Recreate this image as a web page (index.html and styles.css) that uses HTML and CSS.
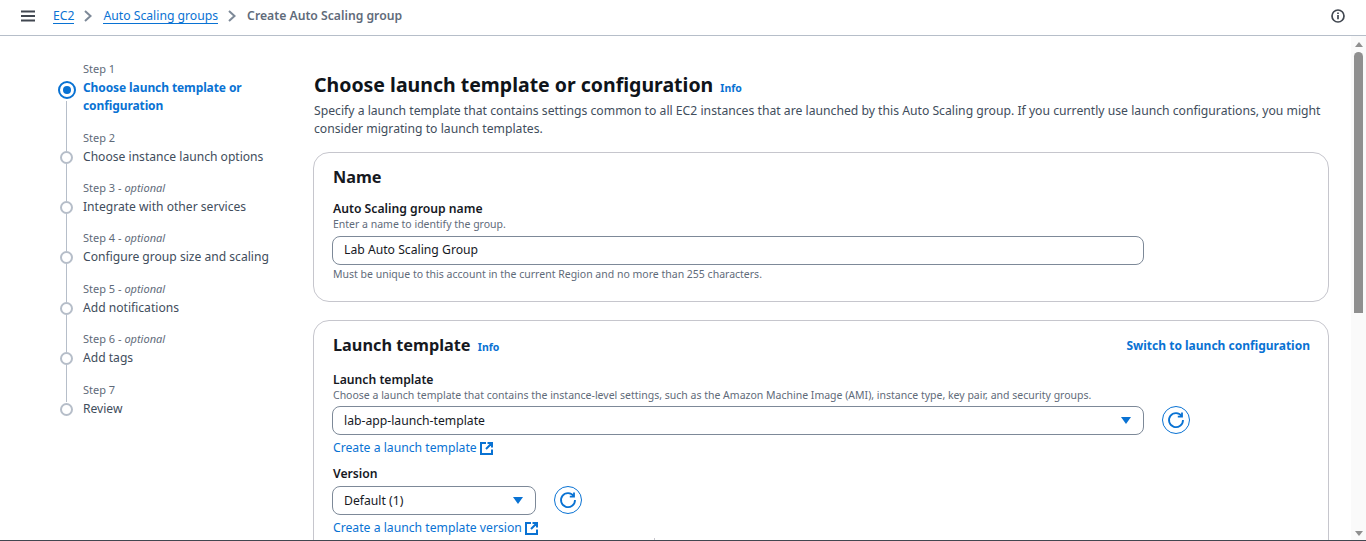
FILE: index.html
```html
<!DOCTYPE html>
<html lang="en">
  <head>
    <meta charset="utf-8" />
    <title>Create Auto Scaling group</title>
    <link rel="stylesheet" href="styles.css">
  </head>
  <body>
    <header class="topbar">
      <svg class="menu-icon" width="14" height="12" viewBox="0 0 14 12"><path d="M0 1.5h14M0 6h14M0 10.5h14" /></svg>
      <nav class="crumbs">
        <a href="#">EC2</a>
        <svg class="crumb-sep" width="8" height="12" viewBox="0 0 8 12"><path d="M1 1l5.5 5L1 11" /></svg>
        <a href="#">Auto Scaling groups</a>
        <svg class="crumb-sep" width="8" height="12" viewBox="0 0 8 12"><path d="M1 1l5.5 5L1 11" /></svg>
        <span class="crumb-current">Create Auto Scaling group</span>
      </nav>
      <svg class="info-icon" width="14" height="14" viewBox="0 0 14 14"><circle cx="7" cy="7" r="6" /><path d="M7 6v4.2M7 3.4v1.6" /></svg>
    </header>

    <div class="page">
      <div class="scroll-area">
        <aside class="steps">
          <div class="step current">
            <div class="step-label">Step 1</div>
            <div class="step-title">Choose launch template or configuration</div>
          </div>
          <div class="step">
            <div class="step-label">Step 2</div>
            <div class="step-title">Choose instance launch options</div>
          </div>
          <div class="step">
            <div class="step-label">Step 3 - <i>optional</i></div>
            <div class="step-title">Integrate with other services</div>
          </div>
          <div class="step">
            <div class="step-label">Step 4 - <i>optional</i></div>
            <div class="step-title">Configure group size and scaling</div>
          </div>
          <div class="step">
            <div class="step-label">Step 5 - <i>optional</i></div>
            <div class="step-title">Add notifications</div>
          </div>
          <div class="step">
            <div class="step-label">Step 6 - <i>optional</i></div>
            <div class="step-title">Add tags</div>
          </div>
          <div class="step last">
            <div class="step-label">Step 7</div>
            <div class="step-title">Review</div>
          </div>
        </aside>

        <main class="content">
          <h1>Choose launch template or configuration <a class="info" href="#">Info</a></h1>
          <p class="intro">Specify a launch template that contains settings common to all EC2 instances that are launched by this Auto Scaling group. If you currently use launch configurations, you might consider migrating to launch templates.</p>

          <section class="card name-card">
            <h2>Name</h2>
            <label class="field-label">Auto Scaling group name</label>
            <div class="hint">Enter a name to identify the group.</div>
            <div class="input">Lab Auto Scaling Group</div>
            <div class="hint below">Must be unique to this account in the current Region and no more than 255 characters.</div>
          </section>

          <section class="card">
            <div class="card-head">
              <h2>Launch template <a class="info" href="#">Info</a></h2>
              <a class="switch" href="#">Switch to launch configuration</a>
            </div>
            <label class="field-label">Launch template</label>
            <div class="hint">Choose a launch template that contains the instance-level settings, such as the Amazon Machine Image (AMI), instance type, key pair, and security groups.</div>
            <div class="select-row">
              <div class="input select wide">lab-app-launch-template<span class="caret"></span></div>
              <button class="refresh" type="button">
                <svg width="18" height="18" viewBox="0 0 18 18"><path d="M14.8 5.200A7 7 0 1 0 16 9" /><path d="M15 1.500v4.200h-4.200" /></svg>
              </button>
            </div>
            <a class="ext-link" href="#">Create a launch template
              <svg width="13" height="13" viewBox="0 0 13 13"><path d="M6 1H1v11h11V7.500M7.500 1H12v4.500M12 1L6 7" /></svg>
            </a>
            <label class="field-label version">Version</label>
            <div class="select-row version-row">
              <div class="input select narrow">Default (1)<span class="caret"></span></div>
              <button class="refresh" type="button">
                <svg width="18" height="18" viewBox="0 0 18 18"><path d="M14.8 5.200A7 7 0 1 0 16 9" /><path d="M15 1.500v4.200h-4.200" /></svg>
              </button>
            </div>
            <a class="ext-link" href="#">Create a launch template version
              <svg width="13" height="13" viewBox="0 0 13 13"><path d="M6 1H1v11h11V7.500M7.500 1H12v4.500M12 1L6 7" /></svg>
            </a>
            <div class="next-table"><span class="col-line"></span></div>
          </section>
        </main>
      </div>

      <div class="scrollbar">
        <span class="arrow up"></span>
        <span class="thumb"></span>
        <span class="arrow down"></span>
      </div>
    </div>
  </body>
</html>
```

FILE: styles.css
```css
html,
body {
  margin: 0;
  height: 100%;
  overflow: hidden;
}

body {
  display: flex;
  flex-direction: column;
  font-family: "Noto Sans", "Open Sans", sans-serif;
  font-size: 12.2px;
  line-height: 18px;
  color: #16191f;
  background: #ffffff;
  border-bottom: 1px solid #414750;
  box-sizing: border-box;
}

a {
  color: #0972d3;
  text-decoration: none;
}

/* top bar */
.topbar {
  flex: none;
  display: flex;
  align-items: center;
  height: 35px;
  padding: 0 21px;
  border-bottom: 1px solid #b6bec9;
  box-sizing: content-box;
}

.menu-icon {
  margin-top: -3px;
}

.menu-icon path {
  fill: none;
  stroke: #414750;
  stroke-width: 2;
}

.crumbs {
  display: flex;
  align-items: center;
  margin-left: 18px;
  margin-top: -4px;
  flex: 1;
}

.crumbs a {
  border-bottom: 1px solid #0972d3;
  line-height: 15px;
}

.crumb-sep {
  margin: 0 11px 0 10px;
}

.crumb-sep path {
  fill: none;
  stroke: #7d8998;
  stroke-width: 2;
}

.crumb-current {
  font-weight: 600;
  color: #5f6b7a;
}

.info-icon {
  margin-right: 0;
  margin-top: -3px;
}

.info-icon circle,
.info-icon path {
  fill: none;
  stroke: #414750;
  stroke-width: 1.700;
}

/* page */
.page {
  flex: 1;
  display: flex;
  min-height: 0;
}

.scroll-area {
  flex: 1;
  display: flex;
  overflow: hidden;
  min-width: 0;
}

.scrollbar {
  flex: none;
  width: 15px;
  display: flex;
  flex-direction: column;
  align-items: center;
  background: #fafafa;
  padding-top: 6px;
  box-sizing: border-box;
}

.thumb {
  width: 9px;
  height: 261px;
  margin-top: 5px;
  background: #8f8f8f;
  border-radius: 5px 5px 0 0;
}

.arrow {
  width: 0;
  height: 0;
  border-left: 4.500px solid transparent;
  border-right: 4.500px solid transparent;
}

.arrow.up {
  border-bottom: 5px solid #8f8f8f;
}

.arrow.down {
  margin-top: auto;
  margin-bottom: 4px;
  border-top: 5px solid #8f8f8f;
}

/* steps */
.steps {
  flex: none;
  width: 230px;
  margin-left: 59px;
  padding-top: 25px;
  box-sizing: border-box;
}

.step {
  position: relative;
  padding-left: 24px;
  padding-bottom: 14.35px;
  color: #414d5c;
}

.step.current {
  padding-bottom: 14.77px;
}

.step.last {
  margin-top: 0.6px;
}

.step-label {
  font-size: 11px;
  line-height: 16px;
  color: #5f6b7a;
}

.step-title {
  font-size: 12.1px;
  line-height: 18px;
  margin-top: 2px;
}

.step::before {
  content: "";
  position: absolute;
  left: 1px;
  top: 21px;
  width: 9px;
  height: 9px;
  border: 2px solid #b6bec9;
  border-radius: 50%;
  background: #fff;
  box-sizing: content-box;
}

.step::after {
  content: "";
  position: absolute;
  left: 7px;
  top: 34px;
  bottom: -21px;
  width: 1px;
  background: #b6bec9;
}

.step.last::after {
  display: none;
}

.step.current .step-title {
  font-size: 12px;
  font-weight: 700;
  letter-spacing: -0.1px;
  color: #0972d3;
  width: 170px;
}

.step.current::before {
  left: -1px;
  top: 20px;
  width: 8px;
  height: 8px;
  border: 2px solid #0972d3;
  background: #0972d3;
  padding: 3px;
  background-clip: content-box;
}

.step.current::after {
  top: 40px;
}

/* content */
.content {
  flex: 1;
  min-width: 0;
  margin-left: 24px;
  margin-right: 22px;
  padding-top: 34px;
}

h1 {
  margin: 0 0 0 1px;
  font-size: 19.5px;
  line-height: 30px;
  font-weight: 700;
  color: #0f141a;
}

.info {
  font-size: 10.500px;
  font-weight: 700;
  margin-left: 2px;
}

h2 .info {
  margin-left: 3px;
}

.intro {
  margin: -1px 0 14px 1px;
  line-height: 18px;
  color: #414d5c;
}

.card {
  border: 1px solid #c6c6cd;
  border-radius: 16px;
  padding: 12px 18px 0 19px;
  margin-bottom: 18px;
}

.name-card {
  height: 150px;
  box-sizing: border-box;
}

h2 {
  margin: 0;
  font-size: 16.3px;
  line-height: 24px;
  font-weight: 700;
  color: #16191f;
}

.card-head {
  display: flex;
  justify-content: space-between;
  align-items: center;
}

.switch {
  font-size: 12px;
  font-weight: 700;
}

.field-label {
  display: block;
  margin-top: 12px;
  font-weight: 600;
  color: #16191f;
}

.name-card .field-label {
  margin-top: 11px;
}

.hint {
  font-size: 10.500px;
  line-height: 12px;
  color: #5f6b7a;
}

.hint.below {
  margin-top: 3px;
}

.input {
  width: 812px;
  height: 29px;
  margin: 6px 0 0 -1px;
  padding: 0 11px;
  line-height: 26px;
  border: 1px solid #7d8998;
  border-radius: 8px;
  box-sizing: border-box;
  color: #16191f;
}

.select-row {
  display: flex;
  align-items: center;
}

.select {
  display: flex;
  justify-content: space-between;
  align-items: center;
  margin-top: 5px;
}

.select.narrow {
  width: 204px;
  margin-top: 3px;
}

.caret {
  width: 0;
  height: 0;
  margin-right: 1px;
  border-left: 5px solid transparent;
  border-right: 5px solid transparent;
  border-top: 7px solid #0972d3;
}

.refresh {
  display: flex;
  align-items: center;
  justify-content: center;
  width: 28px;
  height: 28px;
  margin: 4px 0 0 18px;
  padding: 0;
  border: 1px solid #0972d3;
  border-radius: 50%;
  background: #fff;
}

.version-row .refresh {
  margin-top: 2px;
}

.refresh path {
  fill: none;
  stroke: #0972d3;
  stroke-width: 1.8;
}

.ext-link {
  display: flex;
  align-items: center;
  gap: 3px;
  margin-top: 4px;
}

.ext-link svg path {
  fill: none;
  stroke: #0972d3;
  stroke-width: 2;
}

.field-label.version {
  margin-top: 8px;
}

.next-table {
  height: 30px;
  margin-top: 1px;
}

.col-line {
  display: block;
  width: 1px;
  height: 4px;
  margin-left: 321px;
  background: #c6c6cd;
}
```
